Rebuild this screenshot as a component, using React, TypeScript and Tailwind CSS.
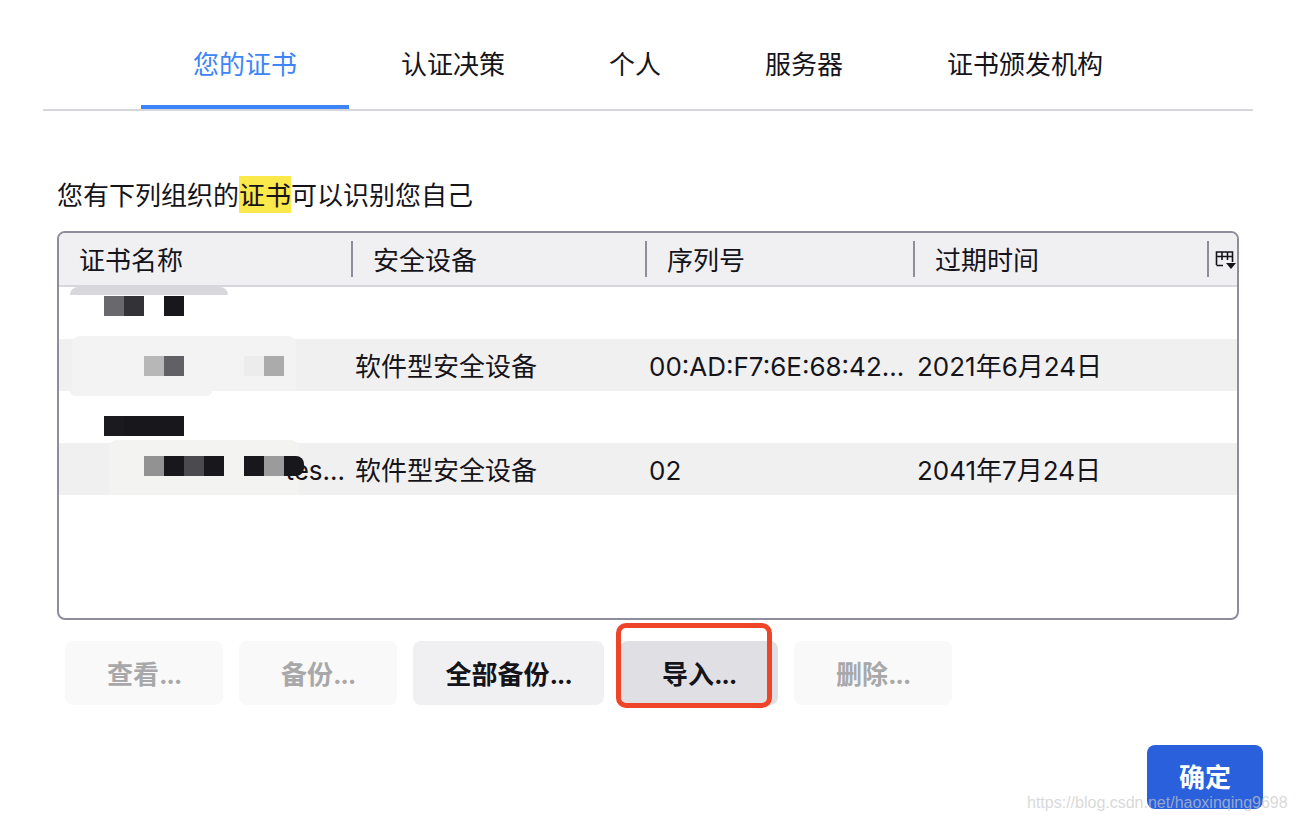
const tabs = ['您的证书', '认证决策', '个人', '服务器', '证书颁发机构'];

const headers = [
  { label: '证书名称', width: 'w-[294px]' },
  { label: '安全设备', width: 'w-[294px]' },
  { label: '序列号', width: 'w-[268px]' },
  { label: '过期时间', width: 'w-[294px]' },
];

const rows = [
  { device: '', serial: '', date: '', name: '', stripe: false },
  { device: '软件型安全设备', serial: '00:AD:F7:6E:68:42...', date: '2021年6月24日', name: '', stripe: true },
  { device: '', serial: '', date: '', name: '', stripe: false },
  { device: '软件型安全设备', serial: '02', date: '2041年7月24日', name: 'tes...', stripe: true },
];

// mosaic over the certificate names, one line per row
const mosaics = [
  { top: 'top-[9px]', left: 'left-[45px]', cells: ['bg-[#69686d]', 'bg-[#333236]', 'bg-transparent', 'bg-[#17171c]'] },
  { top: 'top-[17px]', left: 'left-[85px]', cells: ['bg-[#b7b7b7]', 'bg-[#616065]', 'bg-transparent', 'bg-transparent', 'bg-transparent', 'bg-[#ececec]', 'bg-[#ababab]'] },
  { top: 'top-[25px]', left: 'left-[45px]', cells: ['bg-[#1b1b1f]', 'bg-[#17171c]', 'bg-[#17171c]', 'bg-[#17171c]'] },
  { top: 'top-[13px]', left: 'left-[85px]', cells: ['bg-[#929292]', 'bg-[#17171c]', 'bg-[#4b4a4f]', 'bg-[#17171c]', 'bg-transparent', 'bg-[#17171c]', 'bg-[#9b9b9b]', 'bg-[#17171c] rounded-r-lg'] },
];

const buttons = [
  { label: '查看', cls: 'w-[158px] bg-[#f9f9f9] text-[#a8a8aa]' },
  { label: '备份', cls: 'w-[158px] bg-[#f9f9f9] text-[#a8a8aa]' },
  { label: '全部备份', cls: 'w-[191px] bg-[#f0f0f2] text-[#15141a]' },
  { label: '导入', cls: 'w-[158px] bg-[#e0e0e4] text-[#15141a]' },
  { label: '删除', cls: 'w-[158px] bg-[#f9f9f9] text-[#a8a8aa]' },
];

function ColumnPicker() {
  return (
    <svg width="22" height="20" viewBox="0 0 22 20" className="text-[#15141a]">
      <path d="M1.5 15V2h16v10M1.5 6.5h16M7 2v8M12.5 2v8M1.5 15.5H8" fill="none" stroke="currentColor" strokeWidth="1.6" />
      <path d="M11 13h10l-5 6z" fill="currentColor" />
    </svg>
  );
}

export default function App() {
  return (
    <div className="relative w-[1296px] h-[822px] overflow-hidden bg-white text-[#15141a] text-[26px] font-['Inter','Noto_Sans_CJK_SC',sans-serif]">
      <div className="mx-[43px] pt-[26px]">
        <div className="flex pl-[98px] border-b-2 border-[#d7d7db] h-[85px]">
          {tabs.map((tab, i) => (
            <div
              key={tab}
              className={
                i === 0
                  ? 'px-[52px] h-[83px] leading-[78px] text-[#3d85f6] border-b-4 border-[#3d85f6]'
                  : 'px-[52px] h-[83px] leading-[78px]'
              }
            >
              {tab}
            </div>
          ))}
        </div>
      </div>

      <div className="mx-[57px] mt-[65px] h-[37px] leading-[39px]">
        您有下列组织的<span className="inline-block h-[37px] bg-[#fbe84a]">证书</span>可以识别您自己
      </div>

      <div className="mx-[57px] mt-[18px] h-[389px] border-2 border-[#8f8d9b] rounded-lg overflow-hidden">
        <div className="flex items-center h-[54px] bg-[#f0f0f2] border-b-2 border-[#d7d7db]">
          {headers.map((h) => (
            <div key={h.label} className={`${h.width} pl-[20px] h-[36px] leading-[39px] border-r-2 border-[#8f8d9b]`}>
              {h.label}
            </div>
          ))}
          <div className="pl-[6px] pt-[2px]">
            <ColumnPicker />
          </div>
        </div>
        {rows.map((row, i) => (
          <div key={i} className={row.stripe ? 'relative flex h-[52px] leading-[55px] bg-[#f0f0f1]' : 'relative flex h-[52px] leading-[55px]'}>
            {/* faint retouching left around the mosaic */}
            {i === 1 && <div className="absolute left-[13px] top-[-3px] w-[224px] h-[55px] bg-[#f2f3f2] rounded-t-lg" />}
            {i === 2 && <div className="absolute left-[11px] top-0 w-[142px] h-[5px] bg-[#f3f3f3] rounded-b-lg" />}
            {i === 3 && <div className="absolute left-[50px] top-[-3px] w-[190px] h-[55px] bg-[#f3f3f2] rounded-t-lg" />}
            <div className="relative w-[286px] text-right">{row.name}</div>
            <div className="w-[10px]" />
            <div className="w-[294px]">{row.device}</div>
            <div className="w-[268px]">{row.serial}</div>
            <div>{row.date}</div>
            <div className={`absolute ${mosaics[i].top} ${mosaics[i].left} flex`}>
              {mosaics[i].cells.map((c, j) => (
                <div key={j} className={`w-5 h-5 ${c}`} />
              ))}
            </div>
            {i === 0 && <div className="absolute left-[11px] top-0 w-[158px] h-[8px] bg-[#d8d8dc] rounded-t-lg" />}
          </div>
        ))}
      </div>

      <div className="flex gap-4 ml-[65px] mt-[21px]">
        {buttons.map((b) => (
          <div key={b.label} className={`${b.cls} h-16 rounded-lg font-bold text-center leading-[67px]`}>
            {b.label}
            <span className="tracking-[-1.3px]">...</span>
          </div>
        ))}
      </div>

      <div className="flex justify-end mr-[33px] mt-[40px]">
        <div className="w-[116px] h-16 rounded-lg bg-[#2a60dc] text-white font-bold text-center leading-[66px]">确定</div>
      </div>

      <div className="absolute left-[616px] top-[623px] w-[156px] h-[85px] border-[5px] border-[#ee4428] rounded-[10px]" />
      <div className="absolute left-[1027px] top-[793px] text-[16px] leading-[20px] text-[#c8c8c8]/70 font-['Liberation_Sans',sans-serif]">
        https://blog.csdn.net/haoxinqing9698
      </div>
    </div>
  );
}
